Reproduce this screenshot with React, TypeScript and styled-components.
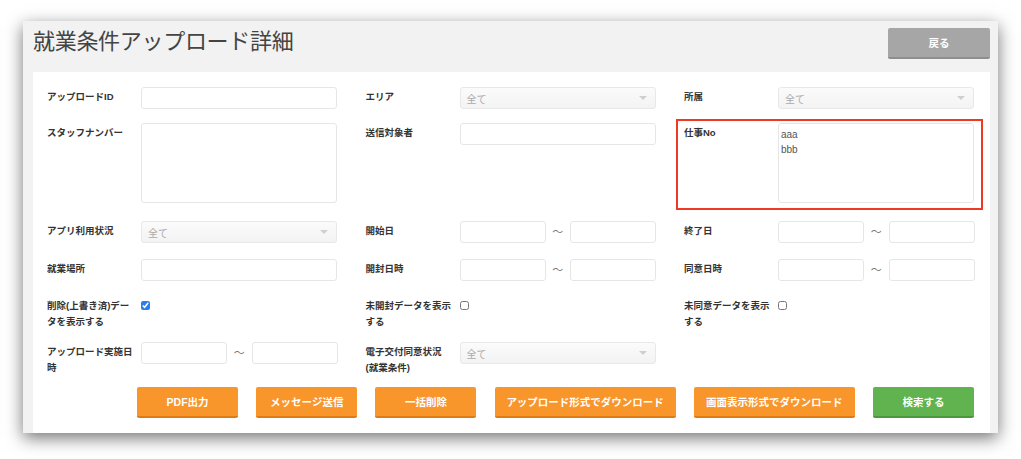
import React from "react";
import styled, { createGlobalStyle } from "styled-components";

const FONT = `"Liberation Sans", "Noto Sans CJK JP", sans-serif`;

const GlobalStyle = createGlobalStyle`
  html, body {
    margin: 0;
    padding: 0;
    background: #ffffff;
  }
  body {
    font-family: ${FONT};
    color: #333;
  }
  * {
    box-sizing: border-box;
  }
`;

const Page = styled.div`
  width: 1021px;
  height: 459px;
  padding: 21px 0 0 23px;
  overflow: hidden;
`;

const Window = styled.main`
  width: 975px;
  height: 412px;
  background: #f2f2f2;
  box-shadow: 0 5px 16px rgba(0, 0, 0, 0.55);
  display: flex;
  flex-direction: column;
  padding: 0 8px 0 10px;
`;

const Header = styled.header`
  height: 51px;
  display: flex;
  align-items: flex-start;
  justify-content: space-between;
`;

const Title = styled.h1`
  margin: 8px 0 0 0;
  font-family: ${FONT};
  font-size: 22px;
  font-weight: 400;
  line-height: 26px;
  color: #444;
  letter-spacing: -0.3px;
`;

const BackButton = styled.button`
  margin-top: 7px;
  width: 102px;
  height: 31px;
  border: none;
  border-bottom: 2px solid #8e8e8e;
  border-radius: 2px;
  background: #a6a6a6;
  color: #fff;
  font-family: ${FONT};
  font-size: 10.5px;
  font-weight: 700;
  cursor: pointer;
`;

const Panel = styled.section`
  flex: 1;
  position: relative;
  background: #fff;
  padding: 15px 16px 0 14px;
  display: flex;
  flex-direction: column;
`;

const Row = styled.div<{ $h: number }>`
  height: ${(p) => p.$h}px;
  display: grid;
  grid-template-columns: repeat(3, 290px);
  column-gap: 28.5px;
  align-items: start;
`;

const Field = styled.div`
  display: flex;
  align-items: flex-start;
`;

const Label = styled.label`
  width: 94px;
  flex: none;
  padding: 2px 7px 0 0;
  font-size: 9.5px;
  font-weight: 700;
  line-height: 16px;
  color: #333;
`;

const TextInput = styled.input<{ $w?: number }>`
  width: ${(p) => (p.$w ? `${p.$w}px` : "196px")};
  height: 22px;
  border: 1px solid #e6e6e6;
  border-radius: 3px;
  background: #fff;
  padding: 0 4px;
  font-family: ${FONT};
  font-size: 10px;
  outline: none;
`;

const TextArea = styled.textarea`
  width: 196px;
  height: 80px;
  border: 1px solid #e6e6e6;
  border-radius: 3px;
  background: #fff;
  padding: 3px 2px;
  font-family: ${FONT};
  font-size: 10px;
  line-height: 15px;
  color: #555;
  resize: none;
  outline: none;
`;

const SelectBox = styled.div`
  width: 196px;
  height: 22px;
  border: 1px solid #e8e8e8;
  border-radius: 3px;
  background: linear-gradient(#fbfbfb, #f3f3f3);
  display: flex;
  align-items: center;
  justify-content: space-between;
  padding: 0 8px 0 6px;
  font-size: 10px;
  color: #aaa;
`;

const Caret = styled.span`
  width: 0;
  height: 0;
  border-left: 4px solid transparent;
  border-right: 4px solid transparent;
  border-top: 4px solid #cfcfcf;
`;

const Range = styled.div`
  display: flex;
  align-items: center;
`;

const Tilde = styled.span`
  width: 24.5px;
  text-align: center;
  font-size: 11px;
  color: #777;
  line-height: 22px;
`;

const Check = styled.input`
  margin: 5px 0 0 0;
  width: 9px;
  height: 9px;
  accent-color: #2b7de9;
`;

const Highlight = styled.div`
  position: absolute;
  left: 643px;
  top: 47px;
  width: 307px;
  height: 91px;
  border: 2px solid #ee3a24;
  pointer-events: none;
`;

const Actions = styled.div`
  display: flex;
  justify-content: flex-end;
  gap: 18.2px;
`;

const ActionButton = styled.button<{ $w: number; $green?: boolean }>`
  width: ${(p) => p.$w}px;
  height: 31px;
  border: none;
  border-bottom: 2px solid ${(p) => (p.$green ? "#4a9a3c" : "#e07c16")};
  border-radius: 2px;
  background: ${(p) => (p.$green ? "#60b34e" : "#f8952b")};
  color: #fff;
  font-family: ${FONT};
  font-size: 10.5px;
  font-weight: 700;
  cursor: pointer;
`;

const Select = () => (
  <SelectBox>
    <span>全て</span>
    <Caret />
  </SelectBox>
);

const DateRange = () => (
  <Range>
    <TextInput $w={86} />
    <Tilde>〜</Tilde>
    <TextInput $w={86} />
  </Range>
);

export default function App() {
  return (
    <Page>
      <GlobalStyle />
      <Window>
        <Header>
          <Title>就業条件アップロード詳細</Title>
          <BackButton>戻る</BackButton>
        </Header>
        <Panel>
          <Row $h={36}>
            <Field>
              <Label>アップロードID</Label>
              <TextInput />
            </Field>
            <Field>
              <Label>エリア</Label>
              <Select />
            </Field>
            <Field>
              <Label>所属</Label>
              <Select />
            </Field>
          </Row>
          <Row $h={98}>
            <Field>
              <Label>スタッフナンバー</Label>
              <TextArea />
            </Field>
            <Field>
              <Label>送信対象者</Label>
              <TextInput />
            </Field>
            <Field>
              <Label>仕事No</Label>
              <TextArea defaultValue={"aaa\nbbb"} />
            </Field>
          </Row>
          <Row $h={38}>
            <Field>
              <Label>アプリ利用状況</Label>
              <Select />
            </Field>
            <Field>
              <Label>開始日</Label>
              <DateRange />
            </Field>
            <Field>
              <Label>終了日</Label>
              <DateRange />
            </Field>
          </Row>
          <Row $h={37}>
            <Field>
              <Label>就業場所</Label>
              <TextInput />
            </Field>
            <Field>
              <Label>開封日時</Label>
              <DateRange />
            </Field>
            <Field>
              <Label>同意日時</Label>
              <DateRange />
            </Field>
          </Row>
          <Row $h={46}>
            <Field>
              <Label>削除(上書き済)データを表示する</Label>
              <Check type="checkbox" defaultChecked />
            </Field>
            <Field>
              <Label>未開封データを表示する</Label>
              <Check type="checkbox" />
            </Field>
            <Field>
              <Label>未同意データを表示する</Label>
              <Check type="checkbox" />
            </Field>
          </Row>
          <Row $h={45}>
            <Field>
              <Label>アップロード実施日時</Label>
              <DateRange />
            </Field>
            <Field>
              <Label>電子交付同意状況(就業条件)</Label>
              <Select />
            </Field>
            <div />
          </Row>
          <Actions>
            <ActionButton $w={101}>PDF出力</ActionButton>
            <ActionButton $w={101}>メッセージ送信</ActionButton>
            <ActionButton $w={101}>一括削除</ActionButton>
            <ActionButton $w={181}>アップロード形式でダウンロード</ActionButton>
            <ActionButton $w={161}>画面表示形式でダウンロード</ActionButton>
            <ActionButton $w={101} $green>
              検索する
            </ActionButton>
          </Actions>
          <Highlight />
        </Panel>
      </Window>
    </Page>
  );
}
